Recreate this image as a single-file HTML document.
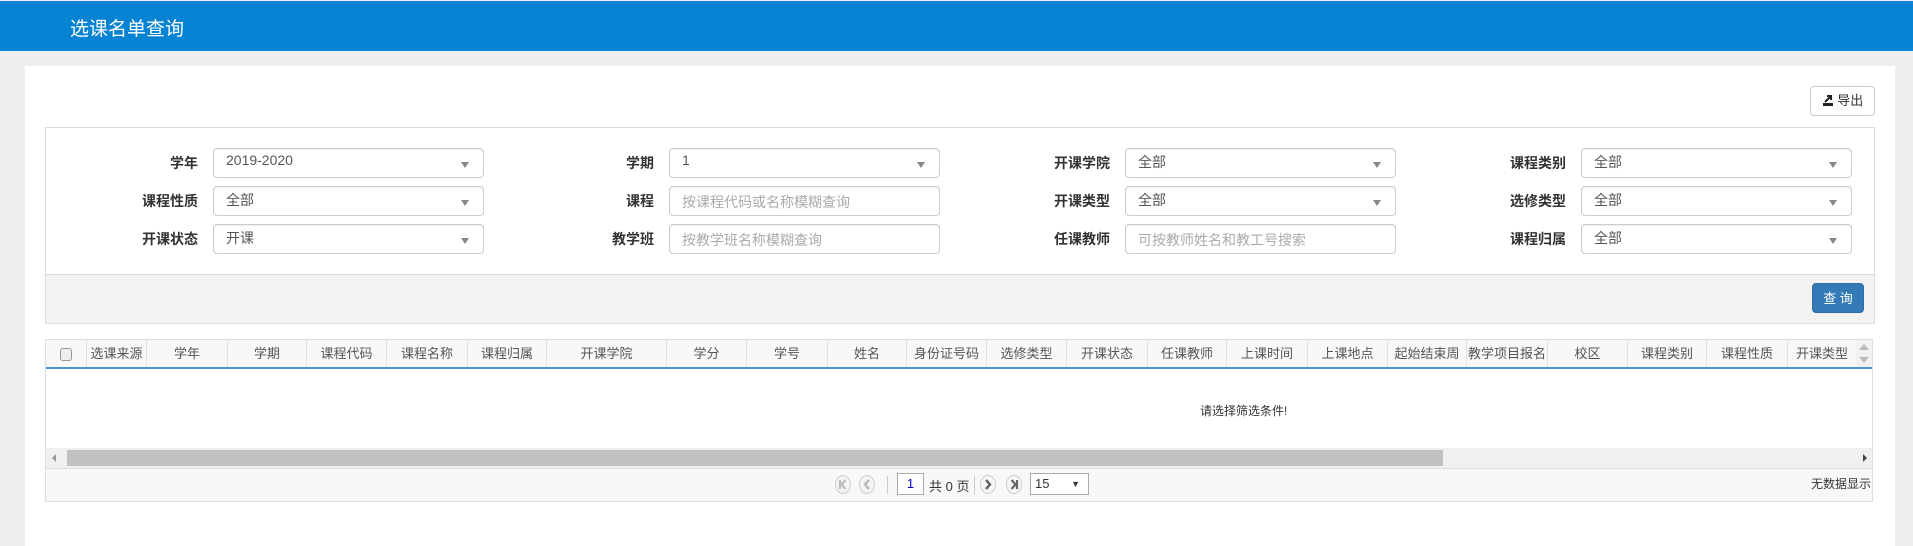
<!DOCTYPE html>
<html><head><meta charset="utf-8">
<style>
*{box-sizing:border-box;margin:0;padding:0}
body{width:1913px;height:535px;background:#efefef;font-family:"Liberation Sans","Noto Sans CJK SC",sans-serif;position:relative;overflow:hidden;color:#333}
.abs{position:absolute}
#hdr{left:0;top:1px;width:1913px;height:50px;background:#0783d3}
#hdr span{position:absolute;left:70px;top:13px;color:#fff;font-size:19px}
#panel{left:25px;top:66px;width:1870px;height:480px;background:#fff}
.btn{border:1px solid #ccc;border-radius:4px;background:#fff;font-size:12px;color:#333}
#fbox{left:45px;top:127px;width:1830px;height:197px;border:1px solid #ddd;background:#fff}
#ffoot{left:46px;top:274px;width:1828px;height:49px;background:#f3f3f3;border-top:1px solid #ddd}
.lbl{position:absolute;font-size:14px;font-weight:bold;color:#333;text-align:right;width:120px;line-height:30px}
.sel{position:absolute;width:271px;height:30px;border:1px solid #ccc;border-radius:4px;background:#fff;font-size:14px;color:#555;padding:3px 0 0 12px;box-shadow:inset 0 1px 1px rgba(0,0,0,.075)}
.sel.dd:after{content:"";position:absolute;right:14px;top:13px;border-left:4px solid transparent;border-right:4px solid transparent;border-top:6px solid #888}
.sel.ph{color:#aaa;padding-top:5px}
#tbl{left:45px;top:339px;width:1828px;height:163px;border:1px solid #ddd;background:#fff}
#thead{position:absolute;left:0;top:0;height:29px;width:1826px;background:#f8f8f8;border-bottom:2px solid #4a92d0}
.th{position:absolute;top:0;height:27px;line-height:27px;font-size:13px;color:#555;text-align:center;border-right:1px solid #e2e2e2;white-space:nowrap;overflow:hidden}
#pager{position:absolute;left:0;top:128px;width:1826px;height:33px;background:#f8f8f8;border-top:1px solid #ddd}
.circ{position:absolute;top:6px;width:16px;height:19px}
</style></head><body>
<div id="hdr" class="abs"><span>选课名单查询</span></div>
<div id="panel" class="abs"></div>
<div class="abs btn" style="left:1810px;top:86px;width:65px;height:30px;line-height:28px;text-align:center;font-size:13px">
<svg width="12" height="12" viewBox="0 0 12 12" style="vertical-align:-1px"><rect x="1" y="9" width="10" height="3" fill="#222"/><path d="M3 8L9 2M5 2H9V6" stroke="#222" stroke-width="2" fill="none"/></svg> 导出</div>
<div id="fbox" class="abs"></div>
<div id="ffoot" class="abs"></div>
<div class="abs" style="left:1812px;top:283px;width:52px;height:30px;background:#337ab7;border-radius:4px;color:#fff;font-size:13px;text-align:center;line-height:30px;border:1px solid #2e6da4">查 询</div>

<div class="lbl" style="left:78px;top:148px">学年</div><div class="sel dd" style="left:213px;top:148px">2019-2020</div>
<div class="lbl" style="left:78px;top:186px">课程性质</div><div class="sel dd" style="left:213px;top:186px">全部</div>
<div class="lbl" style="left:78px;top:224px">开课状态</div><div class="sel dd" style="left:213px;top:224px">开课</div>

<div class="lbl" style="left:534px;top:148px">学期</div><div class="sel dd" style="left:669px;top:148px">1</div>
<div class="lbl" style="left:534px;top:186px">课程</div><div class="sel ph" style="left:669px;top:186px">按课程代码或名称模糊查询</div>
<div class="lbl" style="left:534px;top:224px">教学班</div><div class="sel ph" style="left:669px;top:224px">按教学班名称模糊查询</div>

<div class="lbl" style="left:990px;top:148px">开课学院</div><div class="sel dd" style="left:1125px;top:148px">全部</div>
<div class="lbl" style="left:990px;top:186px">开课类型</div><div class="sel dd" style="left:1125px;top:186px">全部</div>
<div class="lbl" style="left:990px;top:224px">任课教师</div><div class="sel ph" style="left:1125px;top:224px">可按教师姓名和教工号搜索</div>

<div class="lbl" style="left:1446px;top:148px">课程类别</div><div class="sel dd" style="left:1581px;top:148px">全部</div>
<div class="lbl" style="left:1446px;top:186px">选修类型</div><div class="sel dd" style="left:1581px;top:186px">全部</div>
<div class="lbl" style="left:1446px;top:224px">课程归属</div><div class="sel dd" style="left:1581px;top:224px">全部</div>

<div id="tbl" class="abs">
<div id="thead">
<div class="th" style="left:0;width:41px"><span style="display:inline-block;width:12px;height:13px;border:1px solid #999;border-radius:3px;background:#eee;vertical-align:middle"></span></div>
<div class="th" style="left:41px;width:60px">选课来源</div>
<div class="th" style="left:101px;width:81px">学年</div>
<div class="th" style="left:182px;width:79px">学期</div>
<div class="th" style="left:261px;width:80px">课程代码</div>
<div class="th" style="left:341px;width:81px">课程名称</div>
<div class="th" style="left:422px;width:79px">课程归属</div>
<div class="th" style="left:501px;width:120px">开课学院</div>
<div class="th" style="left:621px;width:80px">学分</div>
<div class="th" style="left:701px;width:81px">学号</div>
<div class="th" style="left:782px;width:79px">姓名</div>
<div class="th" style="left:861px;width:80px">身份证号码</div>
<div class="th" style="left:941px;width:80px">选修类型</div>
<div class="th" style="left:1021px;width:81px">开课状态</div>
<div class="th" style="left:1102px;width:79px">任课教师</div>
<div class="th" style="left:1181px;width:81px">上课时间</div>
<div class="th" style="left:1262px;width:80px">上课地点</div>
<div class="th" style="left:1342px;width:79px">起始结束周</div>
<div class="th" style="left:1421px;width:81px">教学项目报名</div>
<div class="th" style="left:1502px;width:80px">校区</div>
<div class="th" style="left:1582px;width:79px">课程类别</div>
<div class="th" style="left:1661px;width:81px">课程性质</div>
<div class="th" style="left:1742px;width:68px;border-right:none">开课类型</div>
<div style="position:absolute;left:1810px;top:0;width:16px;height:27px;background:#f1f1f1">
<div style="position:absolute;left:3px;top:4px;border-left:5px solid transparent;border-right:5px solid transparent;border-bottom:6px solid #bbb"></div>
<div style="position:absolute;left:3px;top:17px;border-left:5px solid transparent;border-right:5px solid transparent;border-top:6px solid #bbb"></div></div>
</div>
<div style="position:absolute;left:1154px;top:62px;font-size:12px;color:#333">请选择筛选条件!</div>
<div style="position:absolute;left:0;top:108px;width:1826px;height:20px;background:#f0f0f0">
<div style="position:absolute;left:6px;top:6px;border-top:4px solid transparent;border-bottom:4px solid transparent;border-right:4px solid #999"></div>
<div style="position:absolute;left:21px;top:2px;width:1376px;height:16px;background:#c1c1c1"></div>
<div style="position:absolute;left:1817px;top:6px;border-top:4px solid transparent;border-bottom:4px solid transparent;border-left:4px solid #444"></div>
</div>
<div id="pager">
<svg class="circ" style="left:789px" viewBox="0 0 16 19"><ellipse cx="8" cy="9.5" rx="7.5" ry="9" fill="#f4f4f4" stroke="#ccc"/><path d="M5 5V14M10.5 5L6.5 9.5L10.5 14" stroke="#bbb" stroke-width="2.2" fill="none"/></svg>
<svg class="circ" style="left:813px" viewBox="0 0 16 19"><ellipse cx="8" cy="9.5" rx="7.5" ry="9" fill="#f4f4f4" stroke="#ccc"/><path d="M10 5L6 9.5L10 14" stroke="#bbb" stroke-width="2.5" fill="none"/></svg>
<div style="position:absolute;left:841px;top:7px;width:1px;height:18px;background:#ccc"></div>
<div style="position:absolute;left:851px;top:4px;width:27px;height:22px;border:1px solid #aaa;background:#fff;font-size:13px;text-align:center;line-height:20px;color:#00c">1</div>
<div style="position:absolute;left:883px;top:7px;font-size:13px;color:#333">共 0 页</div>
<div style="position:absolute;left:928px;top:7px;width:1px;height:18px;background:#ccc"></div>
<svg class="circ" style="left:934px" viewBox="0 0 16 19"><ellipse cx="8" cy="9.5" rx="7.5" ry="9" fill="#f8f8f8" stroke="#ccc"/><path d="M6 5L10 9.5L6 14" stroke="#666" stroke-width="2.5" fill="none"/></svg>
<svg class="circ" style="left:960px" viewBox="0 0 16 19"><ellipse cx="8" cy="9.5" rx="7.5" ry="9" fill="#f8f8f8" stroke="#ccc"/><path d="M11 5V14M5.5 5L9.5 9.5L5.5 14" stroke="#666" stroke-width="2.2" fill="none"/></svg>
<div style="position:absolute;left:984px;top:4px;width:59px;height:22px;border:1px solid #aaa;background:#fff;font-size:13px;line-height:20px;padding-left:4px">15<span style="position:absolute;right:8px;top:0;font-size:9px">▼</span></div>
<div style="position:absolute;right:1px;top:6px;font-size:12px;color:#333">无数据显示</div>
</div>
</div>
</body></html>
